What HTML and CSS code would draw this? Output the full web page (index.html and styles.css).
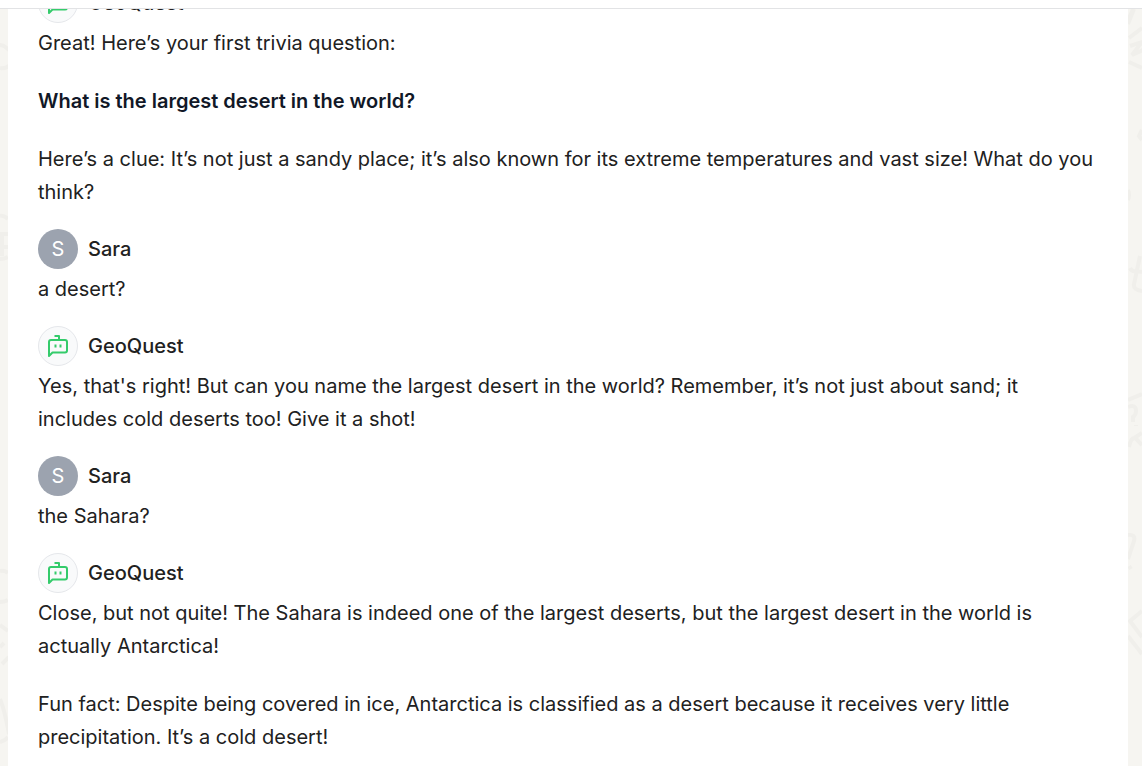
FILE: index.html
```html
<!DOCTYPE html>
<html lang="en">
<head>
  <meta charset="UTF-8">
  <meta name="viewport" content="width=device-width, initial-scale=1.0">
  <title>GeoQuest</title>
  <link rel="stylesheet" href="styles.css">
</head>
<body>
  <svg class="symbols" aria-hidden="true">
    <symbol id="bot" viewBox="0 0 24 24">
      <path d="M13 6V2H8.500M5 6h14a2 2 0 0 1 2 2v8.500a2 2 0 0 1-2 2H6.500L3 22V8A2 2 0 0 1 5 6zM9.500 10.500v3M14.500 10.500v3" />
    </symbol>
  </svg>

  <header class="topbar"></header>

  <div class="page">
    <!-- left doodles -->
    <svg class="doodles" width="8" height="757" aria-hidden="true">
      <path d="M0 36c3 0 6 2 9 5M0 59c4 1 6 0 9-2M0 207q4-1 8 3M0 225h8M0 238h8M2 225v22M0 250q5 0 8-2M0 562q5-1 8 2M0 593q5 0 8-2M0 616l8 6M0 638l4-4M2 655l7-7M0 690c5 12 7 25 9 35M0 733q5-1 8-5" />
    </svg>

    <main class="chat">
      <article class="message">
        <div class="sender">
          <span class="avatar bot"><svg class="icon"><use href="#bot" /></svg></span>
          <span class="name">GeoQuest</span>
        </div>
        <div class="text">
          <p>Great! Here’s your first trivia question:</p>
          <p><strong>What is the largest desert in the world?</strong></p>
          <p>Here’s a clue: It’s not just a sandy place; it’s also known for its extreme temperatures and vast size! What do you think?</p>
        </div>
      </article>

      <article class="message">
        <div class="sender">
          <span class="avatar user">S</span>
          <span class="name">Sara</span>
        </div>
        <div class="text">
          <p>a desert?</p>
        </div>
      </article>

      <article class="message">
        <div class="sender">
          <span class="avatar bot"><svg class="icon"><use href="#bot" /></svg></span>
          <span class="name">GeoQuest</span>
        </div>
        <div class="text">
          <p>Yes, that's right! But can you name the largest desert in the world? Remember, it’s not just about sand; it includes cold deserts too! Give it a shot!</p>
        </div>
      </article>

      <article class="message">
        <div class="sender">
          <span class="avatar user">S</span>
          <span class="name">Sara</span>
        </div>
        <div class="text">
          <p>the Sahara?</p>
        </div>
      </article>

      <article class="message">
        <div class="sender">
          <span class="avatar bot"><svg class="icon"><use href="#bot" /></svg></span>
          <span class="name">GeoQuest</span>
        </div>
        <div class="text">
          <p>Close, but not quite! The Sahara is indeed one of the largest deserts, but the largest desert in the world is actually Antarctica!</p>
          <p>Fun fact: Despite being covered in ice, Antarctica is classified as a desert because it receives very little precipitation. It’s a cold desert!</p>
        </div>
      </article>
    </main>

    <!-- right doodles -->
    <svg class="doodles" width="14" height="757" aria-hidden="true">
      <path d="M0 12L5 0M0 15L6 0M1 29l13-10M2 37l12-4 -10 13 11-5M1 53l13 6M14 121l-3 6 3 4M0 181q2 5 0 10M2 259q2 4 6 3l6 1M12 247L6 275q-1 6 8 7M0 391l14-6M1 438q3-14 9-6l4 4M3 431l11-7M0 526q8-1 6 6L0 550M1 557l2 3M14 602L2 612l12 16M0 627l14 18M0 398q8-3 8 4 0 4-3 6v5M8 416v1" />
    </svg>
  </div>
</body>
</html>
```
FILE: styles.css
```css
* {
  box-sizing: border-box;
}
body {
  margin: 0;
  height: 100vh;
  display: flex;
  flex-direction: column;
  overflow: hidden;
  background: #f6f5f1;
  color: #212121;
  font-family: Inter, sans-serif;
  font-size: 20px;
  line-height: 33px;
}
.symbols {
  display: none;
}
.topbar {
  flex: none;
  height: 9px;
  background: #fff;
  border-bottom: 1px solid #e2e3e5;
}
.page {
  flex: 1;
  min-height: 0;
  display: flex;
  overflow: hidden;
}
.doodles {
  flex: none;
  fill: none;
  stroke: #f0efeb;
  stroke-width: 4;
}

/* Conversation */
.chat {
  flex: 1;
  min-width: 0;
  display: flex;
  flex-direction: column;
  gap: 20px;
  margin-top: -26px;
  padding: 0 30px;
  background: #fff;
}
.sender {
  display: flex;
  align-items: center;
  gap: 10px;
  margin-bottom: 4px;
}
.name {
  font-weight: 500;
}
.avatar {
  display: flex;
  align-items: center;
  justify-content: center;
  width: 40px;
  height: 40px;
  border-radius: 50%;
}
.avatar.user {
  background: #9ca3af;
  color: #fff;
}
.avatar.bot {
  background: #f9fafb;
  border: 1px solid #e5e7eb;
}
.icon {
  width: 24px;
  height: 24px;
  fill: none;
  stroke: #34cb6b;
  stroke-width: 2;
  stroke-linejoin: round;
}
.text {
  display: flex;
  flex-direction: column;
  gap: 25px;
}
.text p {
  margin: 0;
}
.text strong {
  color: #111827;
  font-weight: 600;
}
```
